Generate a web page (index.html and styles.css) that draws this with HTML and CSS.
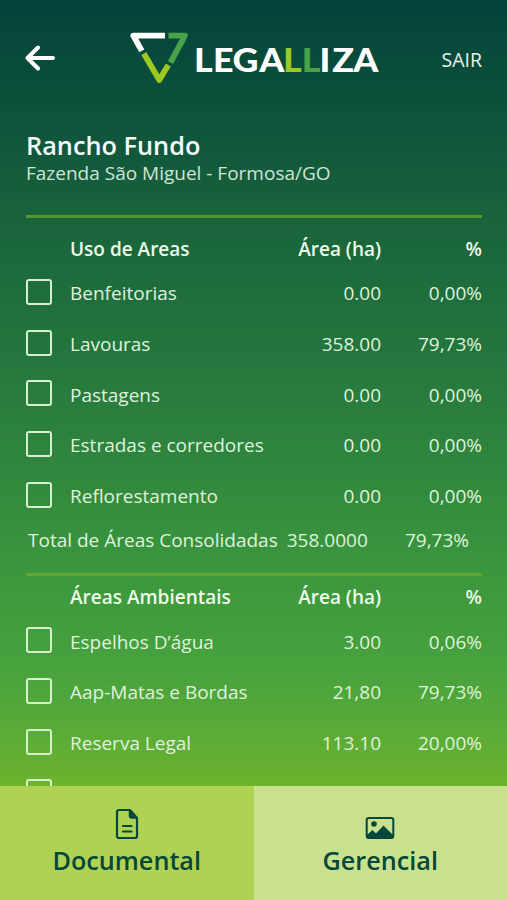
FILE: index.html
```html
<!DOCTYPE html>
<html lang="pt-BR">
<head>
    <meta charset="UTF-8">
    <meta name="viewport" content="width=device-width, initial-scale=1.0">
    <title>Legalliza - Rancho Fundo</title>
    <link rel="stylesheet" href="styles.css">
</head>
<body>
    <header class="topbar">
        <a class="back" href="#" aria-label="Voltar">
            <svg width="30" height="26" viewBox="0 0 30 26" fill="none" stroke="#fff" stroke-width="4" stroke-linecap="round" stroke-linejoin="round">
                <path d="M13 2.5L2.5 13L13 23.5M3 13H28"/>
            </svg>
        </a>
        <svg class="logo" width="250" height="54" viewBox="0 0 250 54">
            <g fill="none" stroke-width="5.8" stroke-linejoin="round">
                <path stroke="#fff" d="M35 4.6H3.3L11.8 19.8"/>
                <path stroke="#4aa147" d="M38.5 4.6H55L40.5 31.5"/>
                <path stroke="#9dc822" d="M13.8 22.5L29.3 49L38.3 34"/>
            </g>
            <text class="logo-text" transform="scale(1.12 1)" x="57.2 74.2 91.6 115.4 136.7 153.4 169.3 180.6 199.3" y="41">LEGA<tspan fill="#9dc822">L</tspan><tspan fill="#4aa147">L</tspan>IZA</text>
        </svg>
        <a class="exit" href="#">SAIR</a>
    </header>

    <main class="content">
        <h1>Rancho Fundo</h1>
        <p class="place">Fazenda São Miguel - Formosa/GO</p>

        <section class="areas first">
            <div class="row head"><span class="name">Uso de Areas</span><span>Área (ha)</span><span>%</span></div>
            <label class="row"><input type="checkbox"><span>Benfeitorias</span><span>0.00</span><span>0,00%</span></label>
            <label class="row"><input type="checkbox"><span>Lavouras</span><span>358.00</span><span>79,73%</span></label>
            <label class="row"><input type="checkbox"><span>Pastagens</span><span>0.00</span><span>0,00%</span></label>
            <label class="row"><input type="checkbox"><span>Estradas e corredores</span><span>0.00</span><span>0,00%</span></label>
            <label class="row"><input type="checkbox"><span>Reflorestamento</span><span>0.00</span><span>0,00%</span></label>
            <div class="total"><span>Total de Áreas Consolidadas</span><span>358.0000</span><span class="percent">79,73%</span></div>
        </section>

        <section class="areas">
            <div class="row head"><span class="name">Áreas Ambientais</span><span>Área (ha)</span><span>%</span></div>
            <label class="row"><input type="checkbox"><span>Espelhos D’água</span><span>3.00</span><span>0,06%</span></label>
            <label class="row"><input type="checkbox"><span>Aap-Matas e Bordas</span><span>21,80</span><span>79,73%</span></label>
            <label class="row"><input type="checkbox"><span>Reserva Legal</span><span>113.10</span><span>20,00%</span></label>
            <label class="row"><input type="checkbox"></label>
        </section>
    </main>

    <nav class="tabs">
        <a class="tab documental" href="#">
            <svg width="24" height="32" viewBox="0 0 24 32" fill="none" stroke="#04473b" stroke-width="2.2" stroke-linecap="round" stroke-linejoin="round">
                <path d="M4 2H15L22 10V28Q22 30 20 30H4Q2 30 2 28V4Q2 2 4 2Z"/>
                <path fill="#04473b" stroke-width="1.5" d="M14.5 2L22 10H17Q14.5 10 14.5 7.5Z"/>
                <path d="M8 18H16.5M8 23.5H16.5"/>
            </svg>
            Documental
        </a>
        <a class="tab gerencial" href="#">
            <svg width="30" height="24" viewBox="0 0 30 24">
                <rect x="1.7" y="2" width="26.6" height="20" rx="2" fill="none" stroke="#04473b" stroke-width="2"/>
                <circle cx="9" cy="8" r="2.8" fill="#04473b"/>
                <path fill="#04473b" d="M2 19L7.5 14L11 17.5L18.5 9.5L28 19V22H2Z"/>
            </svg>
            Gerencial
        </a>
    </nav>
</body>
</html>
```
FILE: styles.css
```css
* {
    box-sizing: border-box;
}

body {
    font-family: "Open Sans", "Noto Sans", sans-serif;
    margin: 0;
    height: 900px;
    display: flex;
    flex-direction: column;
    overflow: hidden;
    color: #dff2dc;
    font-size: 19px;
    background: linear-gradient(#03433b 0, #0c503b 100px, #1a653c 230px, #24753d 350px, #338a3e 490px, #3b973d 570px, #48a23d 670px, #5aab38 730px, #6cb32e 786px);
}

a {
    color: inherit;
    text-decoration: none;
}

.topbar {
    display: flex;
    align-items: center;
    height: 116px;
    padding: 0 25px;
    flex-shrink: 0;
}

.back,
.logo {
    display: block;
}

.back svg {
    display: block;
}

.logo {
    margin-left: 75px;
}

.logo-text {
    font-family: Lato, sans-serif;
    font-weight: 900;
    font-size: 32px;
    fill: #fff;
}

.exit {
    margin-left: auto;
    padding-top: 3px;
    font-weight: 500;
    font-size: 19.5px;
    color: #e8f3ee;
}

.content {
    flex: 1;
    min-height: 0;
    overflow: hidden;
    padding: 14px 25px 0 26px;
}

h1 {
    margin: 0;
    font-size: 25.3px;
    font-weight: 600;
    line-height: 30px;
    color: #f4fbf6;
}

.place {
    margin: 0 0 28px;
    line-height: 27px;
    color: #cfe5d8;
}

.areas {
    border-top: 3px solid #65a52f;
}

.first {
    border-color: #55962f;
    padding-top: 10px;
}

.row {
    display: grid;
    grid-template-columns: 44px 1fr 100px 101px;
    align-items: center;
    height: 50.7px;
}

.row span {
    padding-top: 2px;
}

.row span:nth-child(n+3),
.head span:nth-child(n+2) {
    text-align: right;
}

.head {
    height: 39px;
    padding-top: 1px;
    font-weight: 600;
    color: #eefaea;
}

.head .name {
    grid-column: 1 / 3;
    padding-left: 44px;
}

input {
    appearance: none;
    width: 26px;
    height: 26px;
    margin: -1px 0 0 -0.5px;
    border: 2px solid #d5efcf;
    border-radius: 3px;
}

.total {
    display: flex;
    height: 53px;
    padding: 5px 13px 0 2px;
    line-height: 30px;
    gap: 9px;
}

.total .percent {
    margin-left: auto;
}

.tabs {
    display: flex;
    height: 114px;
    flex-shrink: 0;
    font-size: 25.2px;
    font-weight: 600;
    color: #04473b;
}

.tab {
    flex: 1;
    display: flex;
    flex-direction: column;
    align-items: center;
    justify-content: flex-end;
    padding-bottom: 23px;
    line-height: 34px;
}

.tab svg {
    margin-bottom: 3px;
}

.documental {
    background-color: #b0d253;
}

.gerencial {
    background-color: #c9e08d;
}
```
